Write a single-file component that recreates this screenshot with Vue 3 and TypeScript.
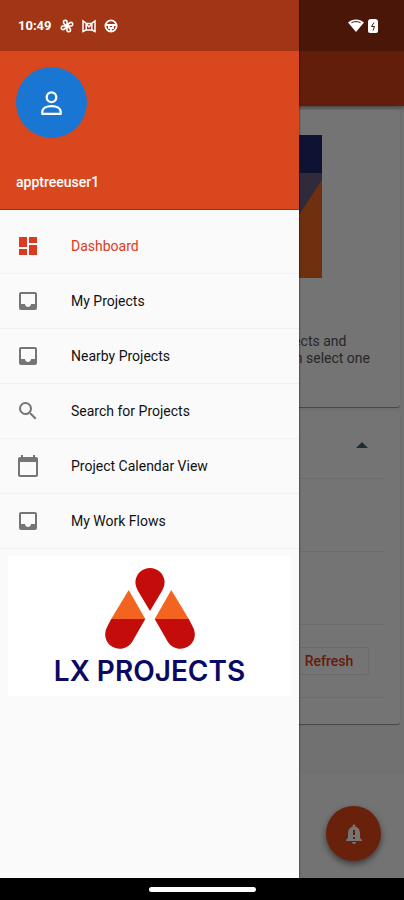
<script setup lang="ts">
import { ref } from 'vue'

type IconName = 'dashboard' | 'inbox' | 'search' | 'calendar'

interface MenuItem {
  label: string
  icon: IconName
}

const icons: Record<IconName, string> = {
  dashboard: 'M3 13h8V3H3v10zm0 8h8v-6H3v6zm10 0h8V11h-8v10zm0-18v6h8V3h-8z',
  inbox:
    'M19 3H5c-1.1 0-2 .9-2 2v14c0 1.1.9 2 2 2h14c1.1 0 2-.9 2-2V5c0-1.1-.9-2-2-2zm0 12h-4c0 1.66-1.35 3-3 3s-3-1.34-3-3H5V5h14v10z',
  search:
    'M15.5 14h-.79l-.28-.27A6.47 6.47 0 0 0 16 9.5 6.5 6.5 0 1 0 9.5 16c1.61 0 3.09-.59 4.23-1.57l.27.28v.79l5 4.99L20.49 19l-4.99-5zm-6 0C7.01 14 5 11.99 5 9.5S7.01 5 9.5 5 14 7.01 14 9.5 11.99 14 9.5 14z',
  calendar:
    'M20 3h-1V1h-2v2H7V1H5v2H4c-1.1 0-2 .9-2 2v16c0 1.1.9 2 2 2h16c1.1 0 2-.9 2-2V5c0-1.1-.9-2-2-2zm0 18H4V8h16v13z',
}

const items: MenuItem[] = [
  { label: 'Dashboard', icon: 'dashboard' },
  { label: 'My Projects', icon: 'inbox' },
  { label: 'Nearby Projects', icon: 'inbox' },
  { label: 'Search for Projects', icon: 'search' },
  { label: 'Project Calendar View', icon: 'calendar' },
  { label: 'My Work Flows', icon: 'inbox' },
]

const active = ref('Dashboard')
</script>

<template>
  <div class="screen">
    <div class="stage">
      <main class="page">
        <div class="app-bar"></div>
        <section class="card intro">
          <svg class="banner" viewBox="0 0 240 143" preserveAspectRatio="xMaxYMin slice" aria-hidden="true">
            <rect width="240" height="143" fill="#222b70" />
            <path d="M0 38h240v105H0z" fill="#6c5c80" />
            <path d="M240 45v98H196V112z" fill="#f26a22" />
          </svg>
          <p class="intro-text">See the projects and<br />you may then select one</p>
        </section>
        <section class="card panel">
          <div class="row head">
            <button class="collapse" type="button" aria-label="Collapse">
              <svg viewBox="0 0 12 6" aria-hidden="true"><path d="M0 6 6 0l6 6z" fill="#45606e" /></svg>
            </button>
          </div>
          <div class="row"></div>
          <div class="row"></div>
          <div class="row"><button class="refresh" type="button">Refresh</button></div>
        </section>
        <div class="footer">
          <button class="fab" type="button" aria-label="Alerts">
            <svg viewBox="0 0 24 24" aria-hidden="true">
              <path
                fill="#fff"
                d="M12 22c1.1 0 2-.9 2-2h-4c0 1.1.9 2 2 2zm6-6v-5c0-3.07-1.63-5.64-4.5-6.32V4c0-.83-.67-1.5-1.5-1.5s-1.5.67-1.5 1.5v.68C7.64 5.36 6 7.92 6 11v5l-2 2v1h16v-1l-2-2z"
              />
              <path d="M12 8v5M12 15v2" stroke="#d84319" stroke-width="2" />
            </svg>
          </button>
        </div>
      </main>

      <div class="scrim"></div>

      <aside class="drawer">
        <header class="profile">
          <span class="avatar">
            <svg viewBox="0 0 24 26" fill="none" stroke="#fff" stroke-width="2.4" aria-hidden="true">
              <circle cx="12" cy="7" r="5" />
              <path d="M2.4 24.4v-2.2c0-3.6 3.8-6 9.6-6s9.6 2.4 9.6 6v2.2z" stroke-linejoin="round" />
            </svg>
          </span>
          <span class="user">apptreeuser1</span>
        </header>
        <nav class="menu">
          <a
            v-for="item in items"
            :key="item.label"
            href="#"
            class="item"
            :class="{ active: item.label === active }"
            @click.prevent="active = item.label"
          >
            <svg class="icon" viewBox="0 0 24 24" aria-hidden="true">
              <path :d="icons[item.icon]" fill="currentColor" />
            </svg>
            <span>{{ item.label }}</span>
          </a>
        </nav>
        <div class="brand">
          <svg class="mark" viewBox="0 0 90 82" aria-hidden="true">
            <path d="M45 44 32.6 23.2A14.6 14.6 0 1 1 57.4 23.2z" fill="#c40d0a" />
            <g v-for="side in ['', 'matrix(-1 0 0 1 90 0)']" :key="side" :transform="side">
              <path d="M23.7 23 40.3 52H6.2z" fill="#f2641f" />
              <path d="M6.2 52h34.1L27.4 74.6A14.6 14.6 0 1 1 2.2 59.8z" fill="#c40d0a" />
            </g>
          </svg>
          <span class="brand-name">LX PROJECTS</span>
        </div>
      </aside>

      <div class="status">
        <span class="clock">10:49</span>
        <svg class="status-icon" viewBox="0 0 14 14" fill="none" stroke="#fff" stroke-width="1.6" aria-hidden="true">
          <path d="M7 7V2.6C7 1.4 5 .8 3.7 1.8 3 3.2 4.5 5.5 7 7zM7 7h4.4c1.2 0 1.8-2 .8-3.3C10.8 3 8.5 4.5 7 7zM7 7v4.4c0 1.2 2 1.8 3.3.8C11 10.8 9.5 8.5 7 7zM7 7H2.6C1.4 7 .8 9 1.8 10.3 3.2 11 5.5 9.5 7 7z" />
        </svg>
        <svg class="status-icon" viewBox="0 0 14 14" fill="none" stroke="#fff" stroke-width="1.5" aria-hidden="true">
          <path d="M1 2v10.5l3-1.5h6l3 1.5V2L9.5 4.5h-5zM4.2 4.5v6.5M9.8 4.5v6.5M4.2 5 7 8l2.8-3" />
        </svg>
        <svg class="status-icon" viewBox="0 0 14 14" fill="none" stroke="#fff" stroke-width="1.8" aria-hidden="true">
          <circle cx="7" cy="7" r="5.6" />
          <path d="M1.5 6h11M5 6v3h4V6M7 9v4" />
        </svg>
        <span class="spacer"></span>
        <svg class="wifi" viewBox="0 0 16 13" aria-hidden="true">
          <path d="M0 3.5C4.5-.6 11.5-.6 16 3.5L8 13z" fill="#fff" />
          <path d="M3.5 3.6c2.8-1.3 6.2-1.3 9 0" stroke="#4a180a" stroke-width="1" fill="none" />
        </svg>
        <svg class="battery" viewBox="0 0 10 14" aria-hidden="true">
          <path d="M3 0h4a3 3 0 0 1 3 3v9a2 2 0 0 1-2 2H2a2 2 0 0 1-2-2V3a3 3 0 0 1 3-3z" fill="#fff" />
          <path d="M6 3.5 3.5 7.5h3L5 11.5" stroke="#4a180a" stroke-width="1" fill="none" />
        </svg>
      </div>
    </div>
    <div class="gesture-bar"><span class="handle"></span></div>
  </div>
</template>

<style>
body {
  margin: 0;
}
</style>

<style scoped>
.screen {
  display: flex;
  flex-direction: column;
  min-height: 100vh;
  overflow: hidden;
  font-family: Roboto, "Liberation Sans", sans-serif;
  color: #111;
}
.stage {
  position: relative;
  flex: 1;
  display: flex;
}
button {
  font: inherit;
  padding: 0;
  cursor: pointer;
}
.page {
  flex: 1;
  display: flex;
  flex-direction: column;
  background: #f7f7f7;
}
.app-bar {
  height: 106px;
  background: #d84319;
  box-shadow: 0 2px 4px rgba(0, 0, 0, 0.4);
}
.card {
  margin: 4px;
  background: #fdfdfd;
  border-radius: 3px;
  box-shadow: 0 1px 1px rgba(0, 0, 0, 0.4);
}
.intro {
  display: flex;
  flex-direction: column;
  align-items: center;
  padding: 25px 0 40px;
}
.banner {
  width: 240px;
  height: 143px;
}
.intro-text {
  align-self: flex-end;
  margin: 55px 30px 0 0;
  font-size: 14px;
  line-height: 17px;
  color: #555;
}
.panel {
  margin-top: 0;
  padding: 0 15px 26px;
}
.row {
  display: flex;
  align-items: center;
  justify-content: flex-end;
  height: 72px;
  border-bottom: 1px solid #ececec;
}
.head {
  height: 67px;
}
.collapse {
  display: flex;
  margin-right: 17px;
  border: 0;
  background: none;
}
.collapse svg {
  width: 12px;
  height: 6px;
}
.refresh {
  margin-right: 16px;
  width: 80px;
  height: 28px;
  border: 1px solid #e6e6e6;
  border-radius: 2px;
  background: #fdfdfd;
  color: #e03a20;
  font-size: 14px;
  font-weight: 500;
}
.footer {
  flex: 1;
  display: flex;
  align-items: flex-end;
  justify-content: flex-end;
  margin-top: 46px;
  padding: 0 23px 17px 0;
  background: #fafafa;
}
.fab {
  display: flex;
  align-items: center;
  justify-content: center;
  width: 55px;
  height: 55px;
  border: 0;
  border-radius: 50%;
  background: #e8481c;
  box-shadow: 0 3px 6px rgba(0, 0, 0, 0.5);
}
.fab svg {
  width: 24px;
  height: 24px;
}
.scrim {
  position: absolute;
  inset: 0;
  background: rgba(0, 0, 0, 0.54);
}
.drawer {
  position: absolute;
  top: 0;
  bottom: 0;
  left: 0;
  right: 105px;
  display: flex;
  flex-direction: column;
  background: #fafafa;
  box-shadow: 0 0 2px rgba(0, 0, 0, 0.8);
}
.profile {
  display: flex;
  flex-direction: column;
  align-items: flex-start;
  gap: 36px;
  padding: 67px 16px 18px;
  background: #d9471e;
  border-bottom: 1px solid #d01818;
}
.avatar {
  display: flex;
  align-items: center;
  justify-content: center;
  width: 71px;
  height: 71px;
  border-radius: 50%;
  background: #1976d2;
}
.avatar svg {
  width: 23px;
  height: 26px;
}
.user {
  color: #fff;
  font-size: 14px;
  font-weight: 500;
  line-height: 17px;
}
.menu {
  padding-top: 9px;
}
.item {
  display: flex;
  align-items: center;
  gap: 31px;
  height: 54px;
  padding: 0 16px;
  border-bottom: 1px solid #f1f1f1;
  color: #111;
  font-size: 14px;
  text-decoration: none;
}
.icon {
  width: 24px;
  height: 24px;
  color: #757575;
}
.active,
.active .icon {
  color: #dc3a20;
}
.brand {
  display: flex;
  flex-direction: column;
  align-items: center;
  margin: 7px 8px;
  padding: 11px 0 7px;
  background: #fff;
}
.mark {
  width: 90px;
  height: 82px;
}
.brand-name {
  padding-top: 4px;
  color: #0a0a64;
  font-family: Inter, sans-serif;
  font-size: 28px;
  font-weight: 600;
  line-height: 36px;
}
.status {
  position: absolute;
  top: 0;
  left: 0;
  right: 0;
  display: flex;
  align-items: center;
  gap: 8px;
  height: 51px;
  padding: 0 26px 0 18px;
  background: rgba(0, 0, 0, 0.25);
}
.clock {
  color: #fff;
  font-size: 13px;
  font-weight: 700;
}
.status-icon {
  width: 14px;
  height: 14px;
}
.spacer {
  flex: 1;
}
.wifi {
  width: 16px;
  height: 13px;
}
.battery {
  width: 10px;
  height: 14px;
  margin-left: -4px;
}
.gesture-bar {
  display: flex;
  align-items: center;
  justify-content: center;
  height: 22px;
  background: #000;
}
.handle {
  width: 107px;
  height: 5px;
  border-radius: 3px;
  background: #fff;
}
</style>
